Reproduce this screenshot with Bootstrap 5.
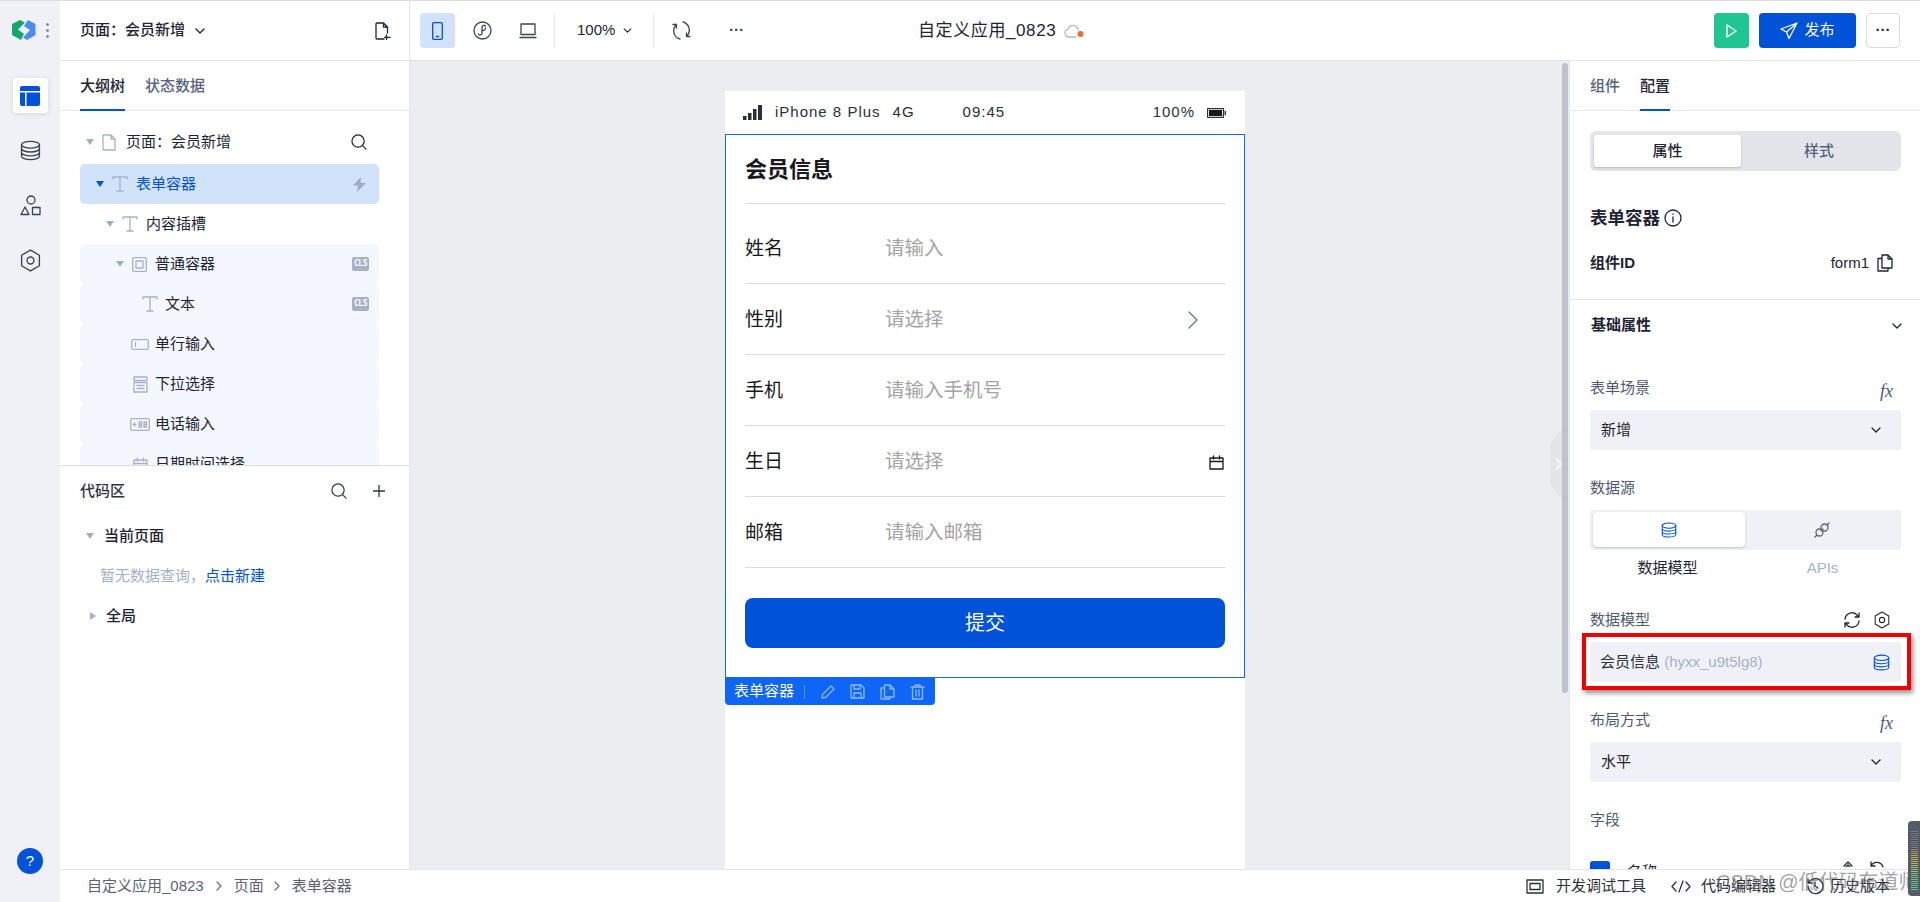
<!DOCTYPE html>
<html lang="zh-CN">
<head>
  <meta charset="UTF-8">
  <title>自定义应用_0823</title>
  <link href="https://cdn.jsdelivr.net/npm/bootstrap@5.3.0/dist/css/bootstrap.min.css" rel="stylesheet">
  <style>
    html, body { height: 100%; }
    body { font-family: "Liberation Sans", "Noto Sans CJK SC", sans-serif; font-size: 15px; color: #1d2433; overflow: hidden; background: #fff; }
    svg { display: block; flex: none; fill: none; stroke: currentColor; stroke-width: 1.3; stroke-linecap: round; stroke-linejoin: round; }
    svg.ap-solid { stroke: none; }
    .ap-shell { height: 902px; border-top: 1px solid #dcdde0; position: relative; }
    .ap-rail { width: 60px; background: #f0f1f6; padding-top: 17px; color: #3c4350; flex: none; }
    .ap-logo { height: 24px; padding-left: 12px; gap: 10px; margin-bottom: 36px; }
    .ap-dots { fill: #6f7685; }
    .ap-rail-btn { width: 35px; height: 35px; border-radius: 4px; margin-bottom: 20px; }
    .ap-rail-btn.is-on { background: #fff; box-shadow: 0 1px 5px rgba(30,50,90,.13); color: #0052d9; }
    .ap-help { width: 26px; height: 26px; border-radius: 50%; background: #0052d9; color: #fff; font-size: 15px; margin: auto auto 28px; }
    .ap-main { width: 1860px; }
    .ap-topbar { height: 60px; border-bottom: 1px solid #e3e5ea; flex: none; }
    .ap-page-title { width: 350px; border-right: 1px solid #e3e5ea; padding: 0 18px 0 20px; font-weight: 500; }
    .ap-tool { width: 35px; height: 35px; border-radius: 4px; color: #3b4252; }
    .ap-tool.is-on { background: #d1e2fb; color: #0052d9; }
    .ap-vline { width: 1px; height: 34px; background: #e3e5ea; }
    .ap-tools { padding-left: 10px; width: 508px; }
    .ap-m6 { margin-left: 6px; }
    .ap-m9 { margin-left: 9px; }
    .ap-m10 { margin-left: 10px; }
    .ap-m12 { margin-left: 12px; }
    .ap-m20 { margin-left: 20px; }
    .ap-m25 { margin-left: 25px; }
    .ap-m30 { margin-left: 30px; }
    .ap-zoomtxt { font-size: 15px; width: 98px; padding-left: 22px; }
    .ap-app-name { font-size: 17px; letter-spacing: .6px; width: 380px; color: #1d2433; }
    .ap-actions { margin-left: auto; padding-right: 20px; gap: 10px; }
    .ap-play { width: 35px; height: 35px; background: #1fc690; border-radius: 4px; color: #fff; }
    .btn.ap-publish { width: 97px; height: 35px; background: #0052d9; color: #fff; font-size: 15px; padding: 0; border: 0; border-radius: 4px; gap: 6px; }
    .ap-more { width: 34px; height: 35px; border: 1px solid #d8dbe8; border-radius: 4px; }
    .ap-mid { height: 808px; flex: none; }
    .ap-left { width: 350px; border-right: 1px solid #e3e5ea; flex: none; }
    .ap-tabs { height: 50px; border-bottom: 1px solid #e3e5ea; gap: 20px; flex: none; padding-left: 20px; }
    .ap-tab { height: 50px; line-height: 49px; color: #56647d; font-weight: 500; }
    .ap-tab.is-on { color: #1d2433; border-bottom: 2px solid #0052d9; }
    .ap-tree { height: 354px; padding: 11px 30px 2px 20px; overflow: hidden; flex: none; }
    .ap-node { height: 40px; border-radius: 5px; padding-right: 10px; flex: none; }
    .ap-node.is-on { background: #d1e2fb; color: #0052d9; margin: 2px 0 0; }
    .ap-node.is-soft { background: #f4f7fe; }
    .ap-caret { width: 0; height: 0; border-left: 4.5px solid transparent; border-right: 4.5px solid transparent; border-top: 6px solid #a3afc6; flex: none; }
    .ap-caret.is-blue { border-top-color: #0052d9; }
    .ap-caret.is-side { border-top: 4.5px solid transparent; border-bottom: 4.5px solid transparent; border-left: 6px solid #a3afc6; border-right: 0; }
    .ap-d0 { padding-left: 6px; gap: 8px; }
    .ap-d1 { padding-left: 16px; gap: 8px; }
    .ap-d2 { padding-left: 26px; gap: 8px; }
    .ap-d3 { padding-left: 36px; gap: 8px; }
    .ap-d4 { padding-left: 62px; gap: 7px; }
    .ap-d5 { padding-left: 50px; gap: 5px; }
    .ap-slot { width: 20px; }
    .ap-d0 > span:nth-of-type(2) { margin-left: 2px; }
    .ap-mr2 { margin-right: 2px; }
    .ap-ticon { color: #a7b2c6; }
    .ap-bolt { fill: #a0abbf; }
    .ap-cls { width: 17px; height: 14px; border-radius: 2px; background: #a7b2c6; color: #fff; font: bold 8px/14px "DejaVu Sans Mono", monospace; text-align: center; letter-spacing: -.4px; }
    .ap-code { border-top: 1px solid #dcdde6; padding: 0 24px 0 20px; }
    .ap-code-head { height: 50px; color: #2d3442; gap: 26px; }
    .ap-code-row { height: 40px; gap: 10px; font-weight: 500; padding-left: 6px; }
    .ap-code-hint { height: 40px; padding-left: 20px; color: #a3afc6; }
    .ap-code-hint a { color: #0052d9; text-decoration: none; }
    .ap-canvas { flex: 1 1 0; background: #ebedf0; overflow: hidden; padding: 30px 0 0 11px; }
    .ap-phone { width: 520px; height: 800px; background: #fff; flex: none; }
    .ap-status { height: 43px; padding: 0 19px 0 18px; font-size: 15px; letter-spacing: 1px; color: #2a2f38; }
    .ap-fill { fill: #2a2f38; }
    .ap-batt { margin-left: 12px; }
    .ap-form { height: 544px; border: 1px solid #1467f5; padding: 0 19px; }
    .ap-form-title { height: 69px; border-bottom: 1px solid #dcdcdc; font-size: 22px; font-weight: 700; margin-bottom: 9px; color: #16181d; }
    .ap-row { height: 71px; border-bottom: 1px solid #dcdcdc; font-size: 19px; color: #16181d; padding-top: 2px; }
    .ap-row-label { width: 140px; }
    .ap-row-ph { color: #a3a3a3; font-size: 19.5px; }
    .ap-row-arrow { margin-right: 27px; color: #6c757d; }
    .ap-row-cal { margin-right: 1px; }
    .btn.ap-submit { display: block; width: 100%; height: 50px; margin-top: 30px; background: #0052d9; color: #fff; font-size: 20px; border: 0; border-radius: 8px; }
    .ap-tag { width: 210px; height: 27px; background: #0f66f6; color: #fff; border-radius: 0 0 4px 4px; padding-left: 9px; white-space: nowrap; }
    .ap-tag-sep { width: 1px; height: 14px; background: #5c95f7; margin: 0 16px 0 10px; flex: none; }
    .ap-tag svg { color: #8fb8fb; margin-right: 15px; }
    .ap-scroll { width: 21px; background: #ebedf0; position: relative; flex: none; border-right: 1px solid #e3e5ea; }
    .ap-thumb { width: 6px; height: 630px; background: #bcc3cf; border-radius: 3px; margin: 2px 0 0 13px; }
    .ap-grip { position: absolute; left: 1px; top: 367px; width: 12px; height: 72px; background: #e3e5e9; clip-path: polygon(100% 0, 0 22%, 0 78%, 100% 100%); color: #f4f5f7; }
    .ap-right { width: 350px; flex: none; overflow: hidden; }
    .ap-props { padding: 20px 19px 0 20px; flex: none; }
    .ap-seg { height: 40px; background: #e3e5ea; border-radius: 6px; padding: 4px; }
    .ap-seg-on { width: 147px; height: 32px; background: #fff; border-radius: 3px; box-shadow: 0 1px 2px rgba(30,50,90,.25); font-weight: 500; }
    .ap-seg-off { flex: 1 1 0; color: #56647d; font-weight: 500; }
    .ap-prop-title { font-size: 17.5px; font-weight: 600; margin-top: 32px; height: 30px; gap: 4px; }
    .ap-prop-id { height: 30px; margin-top: 15px; font-size: 15px; margin-bottom: 21px; }
    .ap-prop-id b { font-weight: 600; }
    .ap-prop-id svg { margin: 0 8px; }
    .ap-sect { border-top: 1px solid #e3e5ea; padding: 0 18px 0 21px; height: 52px; font-weight: 600; flex: none; }
    .ap-fields { padding: 0 19px 0 20px; flex: none; }
    .ap-label { height: 34px; color: #4c5a72; margin: 20px 0 6px; padding-top: 2px; }
    .ap-label.is-first { margin-top: 19px; }
    .ap-label.is-model { margin-top: 16px; }
    .ap-fx { font: italic 18px "Liberation Serif", serif; color: #4c5a72; margin-right: 8px; margin-top: 6px; }
    .ap-select { height: 40px; background: #f0f1f6; border-radius: 4px; padding: 0 20px 0 11px; }
    .ap-ds { height: 40px; background: #f0f1f6; border-radius: 4px; padding: 2px 3px 3px; }
    .ap-ds-on { width: 152px; background: #fff; border-radius: 4px; box-shadow: 0 1px 2px rgba(30,50,90,.25); color: #0052d9; }
    .ap-ds-off { flex: 1 1 0; color: #56647d; }
    .ap-ds-labels { height: 36px; padding-top: 1px; }
    .ap-ds-labels span { width: 155px; text-align: center; }
    .ap-muted { color: #a7b2c6; }
    .ap-check-row { margin-top: 25px; height: 20px; }
    .ap-check { width: 20px; height: 20px; background: #0052d9; border-radius: 3px; margin-right: 17px; }
    .ap-check-row svg { margin-top: -1px; }
    .ap-model { height: 40px; background: #f0f1f6; border-radius: 4px; padding: 0 11px 0 10px; color: #2c3342; }
    .ap-model svg { color: #0052d9; }
    .ap-sync { margin-right: 13px; color: #212529; }
    .ap-cfg { margin-right: 11px; color: #212529; }
    .ap-red { position: absolute; left: 1582px; top: 632px; width: 329px; height: 57px; border: 4px solid #f00000; box-shadow: 2px 3px 5px rgba(0,0,0,.45); pointer-events: none; }
    .ap-bottom { height: 33px; border-top: 1px solid #e3e5ea; flex: none; padding: 0 30px 0 27px; color: #5c6370; background: #fff; position: relative; }
    .ap-bottom svg { color: #6a7080; }
    .ap-bottom-tools { margin-left: auto; color: #2a2f38; }
    .ap-bottom-tools svg { color: #2a2f38; }
    .ap-watermark { position: absolute; left: 1716px; top: 866px; font-size: 20px; color: rgba(100,100,100,.6); white-space: nowrap; pointer-events: none; }
    .ap-meter { position: absolute; left: 1908px; top: 820px; width: 12px; height: 75px; background: #555b68; border-radius: 4px 0 0 4px; padding: 10px 2px 6px 3px; }
    .ap-meter i { display: block; height: 100%; background: repeating-linear-gradient(0deg, transparent 0 1px, rgba(70,75,85,.9) 1px 2px), linear-gradient(180deg, #767b85 0 25%, #c9b25a 45%, #8fc47a 70%, #4fc6a0 100%); }
  </style>
</head>
<body>
  <svg width="0" height="0" class="position-absolute">
    <symbol id="i-chev" viewBox="0 0 10 6"><path d="M1 1l4 4 4-4"/></symbol>
    <symbol id="i-db" viewBox="0 0 20 20"><ellipse cx="10" cy="4.5" rx="8.5" ry="3.2"/><path d="M1.5 4.5v11c0 1.8 3.8 3.2 8.5 3.2s8.5-1.4 8.5-3.2v-11M1.5 8.2c0 1.8 3.8 3.2 8.5 3.2s8.5-1.4 8.5-3.2M1.5 11.9c0 1.8 3.8 3.2 8.5 3.2s8.5-1.4 8.5-3.2"/></symbol>
    <symbol id="i-hex" viewBox="0 0 20 22"><path d="M10 1l8.5 5v10L10 21l-8.5-5V6z"/><circle cx="10" cy="11" r="3.3"/></symbol>
    <symbol id="i-search" viewBox="0 0 17 17"><circle cx="7.5" cy="7.5" r="6.5"/><path d="M12.3 12.3l3.7 3.7"/></symbol>
    <symbol id="i-t" viewBox="0 0 16 16"><path d="M1 3V1h14v2M8 1v14M5 15h6"/></symbol>
    <symbol id="i-sync" viewBox="0 0 18 18"><path d="M2 8a7 7 0 0 1 12.5-3.5L16 6M16 10a7 7 0 0 1-12.5 3.5L2 12M16 2v4h-4M2 16v-4h4"/></symbol>
  </svg>

  <div class="ap-shell d-flex">
    <!-- left rail -->
    <aside class="ap-rail d-flex flex-column">
      <div class="ap-logo d-flex align-items-center">
        <svg class="ap-solid" width="24" height="20" viewBox="0 0 24 20">
          <path d="M0 4L8 0l5 2.5-7 7 6 4.5-3 6-9-5z" fill="#10a86b"/>
          <path d="M16 0l7.5 4v11L15 20l-4-2.5 7-7.5-6-4z" fill="#4a8df2"/>
        </svg>
        <svg class="ap-solid ap-dots" width="3" height="15" viewBox="0 0 3 15"><circle cx="1.5" cy="1.5" r="1.3"/><circle cx="1.5" cy="7.5" r="1.3"/><circle cx="1.5" cy="13.5" r="1.3"/></svg>
      </div>
      <div class="ap-rail-btn is-on d-flex align-items-center justify-content-center mx-auto">
        <svg class="ap-solid" width="20" height="20" viewBox="0 0 20 20"><path d="M2 0h16a2 2 0 0 1 2 2v3H0V2a2 2 0 0 1 2-2zM0 6.5h5V20H2a2 2 0 0 1-2-2zM6.5 6.5H20V18a2 2 0 0 1-2 2H6.5z" fill="#0052d9"/></svg>
      </div>
      <div class="ap-rail-btn d-flex align-items-center justify-content-center mx-auto"><svg width="21" height="21"><use href="#i-db"/></svg></div>
      <div class="ap-rail-btn d-flex align-items-center justify-content-center mx-auto">
        <svg width="21" height="21" viewBox="0 0 21 21"><circle cx="11" cy="5" r="4"/><path d="M5 12l4 7.5H1zM12.5 12.5H20v7h-7.5z"/></svg>
      </div>
      <div class="ap-rail-btn d-flex align-items-center justify-content-center mx-auto"><svg width="21" height="23"><use href="#i-hex"/></svg></div>
      <div class="ap-help d-flex align-items-center justify-content-center">?</div>
    </aside>

    <div class="ap-main d-flex flex-column">
      <!-- top bar -->
      <header class="ap-topbar d-flex align-items-center">
        <div class="ap-page-title h-100 d-flex align-items-center">
          <span>页面：会员新增</span>
          <svg class="ap-m10" width="10" height="6"><use href="#i-chev"/></svg>
          <svg class="ms-auto" width="16" height="18" viewBox="0 0 16 18"><path d="M9 17H2a1 1 0 0 1-1-1V2a1 1 0 0 1 1-1h6.5l4 4v6M8.500 1v4h4M11.500 13v4.500M9.500 15.300h5.500"/></svg>
        </div>
        <div class="ap-tools d-flex align-items-center">
          <div class="ap-tool is-on d-flex align-items-center justify-content-center">
            <svg width="11" height="18" viewBox="0 0 11 18"><rect x=".7" y=".7" width="9.6" height="16.6" rx="1.2"/><path d="M4.5 14.5h2"/></svg>
          </div>
          <div class="ap-tool ap-m10 d-flex align-items-center justify-content-center">
            <svg width="19" height="19" viewBox="0 0 19 19"><circle cx="9.5" cy="9.5" r="8.5"/><path d="M12.5 5c-1-1.300-3.500-.7-3.500 1.500v5.500c0 2.300-2.800 2.600-3.500 1M9 9.500c1.800.4 3.500-.7 3.500-2.500"/></svg>
          </div>
          <div class="ap-tool ap-m10 d-flex align-items-center justify-content-center">
            <svg width="18" height="16" viewBox="0 0 18 16"><path d="M2 1h14v10.500H2zM1 14.500h16"/></svg>
          </div>
          <div class="ap-vline ap-m9"></div>
          <div class="ap-zoomtxt d-flex align-items-center">100%<svg class="ms-2" width="9" height="5"><use href="#i-chev"/></svg></div>
          <div class="ap-vline"></div>
          <div class="ap-tool ap-m10 d-flex align-items-center justify-content-center">
            <svg width="19" height="21" viewBox="0 0 19 21"><path d="M11 2a8.500 8.500 0 0 1 3.500 14.500M8 19A8.500 8.500 0 0 1 4.500 4.500M14.500 13v3.500H18M4.500 8V4.500H1"/></svg>
          </div>
          <div class="ap-tool ap-m20 d-flex align-items-center justify-content-center fw-bold">···</div>
        </div>
        <div class="ap-app-name d-flex align-items-center">
          <span>自定义应用_0823</span>
          <svg class="ms-2" width="20" height="15" viewBox="0 0 20 15"><path d="M5 14a4 4 0 0 1-.8-7.900A5 5 0 0 1 13.500 5a4 4 0 0 1 1 2M5 14h7" stroke="#b5bbc8"/><circle cx="16.500" cy="11" r="3" fill="#f26b2e" stroke="none"/></svg>
        </div>
        <div class="ap-actions d-flex align-items-center">
          <div class="ap-play d-flex align-items-center justify-content-center">
            <svg width="11" height="14" viewBox="0 0 11 14"><path d="M1 1l9 6-9 6z" stroke-width="1.500"/></svg>
          </div>
          <button class="btn ap-publish d-flex align-items-center justify-content-center">
            <svg width="18" height="18" viewBox="0 0 18 18"><path d="M17 1L1 7l5.500 3L9 16.500zM6.500 10L17 1"/></svg>发布
          </button>
          <div class="ap-more d-flex align-items-center justify-content-center fw-bold">···</div>
        </div>
      </header>

      <div class="ap-mid d-flex">
        <!-- outline and code area -->
        <section class="ap-left d-flex flex-column">
          <div class="ap-tabs d-flex">
            <div class="ap-tab is-on">大纲树</div>
            <div class="ap-tab">状态数据</div>
          </div>
          <div class="ap-tree d-flex flex-column">
            <div class="ap-node ap-d0 d-flex align-items-center">
              <span class="ap-caret"></span>
              <svg class="ap-ticon" width="14" height="17" viewBox="0 0 14 17"><path d="M1 1h8l4 4v11H1zM9 1v4h4"/></svg>
              <span>页面：会员新增</span>
              <svg class="ms-auto ap-mr2 text-dark" width="16" height="16"><use href="#i-search"/></svg>
            </div>
            <div class="ap-node is-on ap-d1 d-flex align-items-center">
              <span class="ap-caret is-blue"></span>
              <svg class="ap-ticon" width="16" height="16"><use href="#i-t"/></svg>
              <span>表单容器</span>
              <svg class="ap-solid ap-bolt ms-auto ap-mr2" width="15" height="15" viewBox="0 0 15 15"><path d="M9 0L1 8.500h5L5 15l9-9H8.500z"/></svg>
            </div>
            <div class="ap-node ap-d2 d-flex align-items-center">
              <span class="ap-caret"></span>
              <svg class="ap-ticon" width="16" height="16"><use href="#i-t"/></svg>
              <span>内容插槽</span>
            </div>
            <div class="ap-node is-soft ap-d3 d-flex align-items-center">
              <span class="ap-caret"></span>
              <svg class="ap-ticon" width="15" height="15" viewBox="0 0 15 15"><rect x=".7" y=".7" width="13.6" height="13.6" rx="1"/><rect x="4" y="4" width="7" height="7"/></svg>
              <span>普通容器</span>
              <span class="ap-cls ms-auto">CLS</span>
            </div>
            <div class="ap-node is-soft ap-d4 d-flex align-items-center">
              <svg class="ap-ticon" width="16" height="16"><use href="#i-t"/></svg>
              <span>文本</span>
              <span class="ap-cls ms-auto">CLS</span>
            </div>
            <div class="ap-node is-soft ap-d5 d-flex align-items-center">
              <div class="ap-slot d-flex justify-content-center"><svg class="ap-ticon" width="18" height="11" viewBox="0 0 18 11"><rect x=".7" y=".7" width="16.6" height="9.6" rx="1"/><path d="M4.5 3.5v4"/></svg></div>
              <span>单行输入</span>
            </div>
            <div class="ap-node is-soft ap-d5 d-flex align-items-center">
              <div class="ap-slot d-flex justify-content-center"><svg class="ap-ticon" width="15" height="17" viewBox="0 0 15 17"><path d="M1 1h13v3.500H1zM1 6.500h13V16H1zM4 9.500h7M4 12.500h7"/></svg></div>
              <span>下拉选择</span>
            </div>
            <div class="ap-node is-soft ap-d5 d-flex align-items-center">
              <div class="ap-slot d-flex justify-content-center"><svg class="ap-ticon" width="20" height="13" viewBox="0 0 20 13"><rect x=".7" y=".7" width="18.6" height="11.6" rx="1"/><path d="M3 6.500h3M4.500 5v3M9 4h2.500v5H9zM14 4h2.500v5H14zM9 6.500h2.500M14 6.500h2.500"/></svg></div>
              <span>电话输入</span>
            </div>
            <div class="ap-node is-soft ap-d5 d-flex align-items-center">
              <div class="ap-slot d-flex justify-content-center"><svg class="ap-ticon" width="15" height="15" viewBox="0 0 15 15"><path d="M1 3h13v11H1zM1 6.500h13M4.500 1v3M10.500 1v3"/></svg></div>
              <span>日期时间选择</span>
            </div>
          </div>
          <div class="ap-code flex-grow-1">
            <div class="ap-code-head d-flex align-items-center">
              <span class="fw-medium me-auto">代码区</span>
              <svg width="16" height="16"><use href="#i-search"/></svg>
              <svg width="12" height="12" viewBox="0 0 12 12"><path d="M6 0v12M0 6h12"/></svg>
            </div>
            <div class="ap-code-row d-flex align-items-center"><span class="ap-caret"></span><span>当前页面</span></div>
            <div class="ap-code-hint d-flex align-items-center">暂无数据查询，<a href="#">点击新建</a></div>
            <div class="ap-code-row d-flex align-items-center"><span class="ap-caret is-side ms-1"></span><span>全局</span></div>
          </div>
        </section>

        <!-- canvas -->
        <main class="ap-canvas d-flex justify-content-center">
          <div class="ap-phone">
            <div class="ap-status d-flex align-items-center">
              <svg class="ap-solid ap-fill" width="20" height="15" viewBox="0 0 20 15"><path d="M0 11h3.500v4H0zM5 8h3.500v7H5zM10 4h3.500v11H10zM15 0h4v15h-4z"/></svg>
              <span class="ms-2 ps-1">iPhone 8 Plus</span>
              <span class="ms-2 ps-1">4G</span>
              <span class="ms-5">09:45</span>
              <span class="ms-auto">100%</span>
              <svg class="ap-batt" width="19" height="10" viewBox="0 0 19 10"><rect x=".5" y=".5" width="16" height="9" rx="1"/><rect x="2" y="2" width="13" height="6" fill="#16181d" stroke="none"/><path d="M18.300 3.500v3"/></svg>
            </div>
            <div class="ap-form">
              <div class="ap-form-title d-flex align-items-center">会员信息</div>
              <div class="ap-row d-flex align-items-center"><span class="ap-row-label">姓名</span><span class="ap-row-ph">请输入</span></div>
              <div class="ap-row d-flex align-items-center"><span class="ap-row-label">性别</span><span class="ap-row-ph">请选择</span>
                <svg class="ms-auto ap-row-arrow" width="10" height="20" viewBox="0 0 10 20"><path d="M1 2l8 8-8 8"/></svg></div>
              <div class="ap-row d-flex align-items-center"><span class="ap-row-label">手机</span><span class="ap-row-ph">请输入手机号</span></div>
              <div class="ap-row d-flex align-items-center"><span class="ap-row-label">生日</span><span class="ap-row-ph">请选择</span>
                <svg class="ms-auto ap-row-cal" width="15" height="15" viewBox="0 0 15 15"><path d="M1 3h13v11H1zM1 6.500h13M4.500 1v3M10.500 1v3"/></svg></div>
              <div class="ap-row d-flex align-items-center"><span class="ap-row-label">邮箱</span><span class="ap-row-ph">请输入邮箱</span></div>
              <button class="btn ap-submit">提交</button>
            </div>
            <div class="ap-tag d-flex align-items-center">
              <span>表单容器</span><span class="ap-tag-sep"></span>
              <svg width="14" height="14" viewBox="0 0 14 14"><path d="M10 1l3 3-8.500 8.500L1 13l.5-3.500z"/></svg>
              <svg width="15" height="15" viewBox="0 0 15 15"><path d="M1 1h10l3 3v10H1zM4 1v4h6V1M4 14V9h7v5"/></svg>
              <svg width="15" height="16" viewBox="0 0 15 16"><path d="M4.500 1H10l4 4v8H4.500zM10 1v4h4M4.500 4H1v11h9v-2"/></svg>
              <svg width="15" height="16" viewBox="0 0 15 16"><path d="M1 3h13M5 3V1h5v2M2.500 3v12h10V3M6 6v6M9 6v6"/></svg>
            </div>
          </div>
        </main>
        <div class="ap-scroll">
          <div class="ap-thumb"></div>
          <div class="ap-grip d-flex align-items-center justify-content-end">
            <svg width="6" height="12" viewBox="0 0 6 12"><path d="M1 1l4 5-4 5" stroke-width="2"/></svg>
          </div>
        </div>

        <!-- property panel -->
        <section class="ap-right d-flex flex-column">
          <div class="ap-tabs d-flex">
            <div class="ap-tab">组件</div>
            <div class="ap-tab is-on">配置</div>
          </div>
          <div class="ap-props">
            <div class="ap-seg d-flex align-items-center">
              <div class="ap-seg-on h-100 d-flex align-items-center justify-content-center">属性</div>
              <div class="ap-seg-off d-flex align-items-center justify-content-center">样式</div>
            </div>
            <div class="ap-prop-title d-flex align-items-center">表单容器
              <svg width="18" height="18" viewBox="0 0 18 18"><circle cx="9" cy="9" r="8"/><path d="M9 8v5M9 5v.3"/></svg>
            </div>
            <div class="ap-prop-id d-flex align-items-center">
              <b>组件ID</b><span class="ms-auto">form1</span>
              <svg width="16" height="18" viewBox="0 0 16 18"><path d="M5 1h6l4 4v9H5zM11 1v4h4M5 4.500H1V17h10v-3"/></svg>
            </div>
          </div>
          <div class="ap-sect d-flex align-items-center">基础属性
            <svg class="ms-auto" width="10" height="6"><use href="#i-chev"/></svg></div>
          <div class="ap-fields">
            <div class="ap-label is-first d-flex align-items-center justify-content-between">表单场景<span class="ap-fx">fx</span></div>
            <div class="ap-select d-flex align-items-center">新增<svg class="ms-auto" width="10" height="6"><use href="#i-chev"/></svg></div>
            <div class="ap-label d-flex align-items-center">数据源</div>
            <div class="ap-ds d-flex">
              <div class="ap-ds-on d-flex align-items-center justify-content-center"><svg width="16" height="16"><use href="#i-db"/></svg></div>
              <div class="ap-ds-off d-flex align-items-center justify-content-center">
                <svg width="16" height="16" viewBox="0 0 16 16"><circle cx="5.500" cy="10.500" r="3.500"/><circle cx="10.500" cy="5.500" r="3.500"/><path d="M1 15l2-2M13 3l2-2M7 9l2-2"/></svg>
              </div>
            </div>
            <div class="ap-ds-labels d-flex align-items-center"><span>数据模型</span><span class="ap-muted">APIs</span></div>
            <div class="ap-label is-model d-flex align-items-center">数据模型
              <svg class="ms-auto ap-sync" width="18" height="18"><use href="#i-sync"/></svg>
              <svg class="ap-cfg" width="16" height="18"><use href="#i-hex"/></svg>
            </div>
            <div class="ap-model d-flex align-items-center">会员信息&nbsp;<span class="ap-muted">(hyxx_u9t5lg8)</span>
              <svg class="ms-auto" width="17" height="17"><use href="#i-db"/></svg></div>
            <div class="ap-label d-flex align-items-center justify-content-between">布局方式<span class="ap-fx">fx</span></div>
            <div class="ap-select d-flex align-items-center">水平<svg class="ms-auto" width="10" height="6"><use href="#i-chev"/></svg></div>
            <div class="ap-label d-flex align-items-center">字段</div>
            <div class="ap-check-row d-flex">
              <div class="ap-check"></div>
              <span>名称</span>
              <svg class="ms-auto" width="10" height="7" viewBox="0 0 10 7"><path d="M1 6l4-4 4 4M1 9l4-4 4 4"/></svg>
              <svg class="ms-3 me-3" width="16" height="10" viewBox="0 0 16 10"><path d="M2 6a6.500 6.500 0 0 1 12 1M2 2v4h4"/></svg>
            </div>
          </div>
        </section>
      </div>

      <!-- bottom bar -->
      <footer class="ap-bottom d-flex align-items-center">
        <span>自定义应用_0823</span>
        <svg class="ap-m12" width="6" height="10" viewBox="0 0 6 10"><path d="M1 1l4 4-4 4"/></svg>
        <span class="ap-m12">页面</span>
        <svg class="ap-m10" width="6" height="10" viewBox="0 0 6 10"><path d="M1 1l4 4-4 4"/></svg>
        <span class="ap-m12">表单容器</span>
        <div class="ap-bottom-tools d-flex align-items-center">
          <svg width="18" height="15" viewBox="0 0 18 15"><path d="M1 1h16v13H1zM4 4.500h10v6H4z"/></svg>
          <span class="ap-m12">开发调试工具</span>
          <svg class="ap-m25" width="20" height="13" viewBox="0 0 20 13"><path d="M5 2L1 6.500 5 11M15 2l4 4.500L15 11M12 1L8 12"/></svg>
          <span class="ap-m10">代码编辑器</span>
          <svg class="ap-m30" width="18" height="18" viewBox="0 0 18 18"><path d="M2 9a7.500 7.500 0 1 0 2.500-5.500L2 6M2 2v4h4M9 5v4l3 2"/></svg>
          <span class="ap-m6">历史版本</span>
        </div>
      </footer>
    </div>

    <div class="ap-red"></div>
    <div class="ap-watermark">CSDN @低代码布道师</div>
    <div class="ap-meter"><i></i></div>
  </div>
</body>
</html>
